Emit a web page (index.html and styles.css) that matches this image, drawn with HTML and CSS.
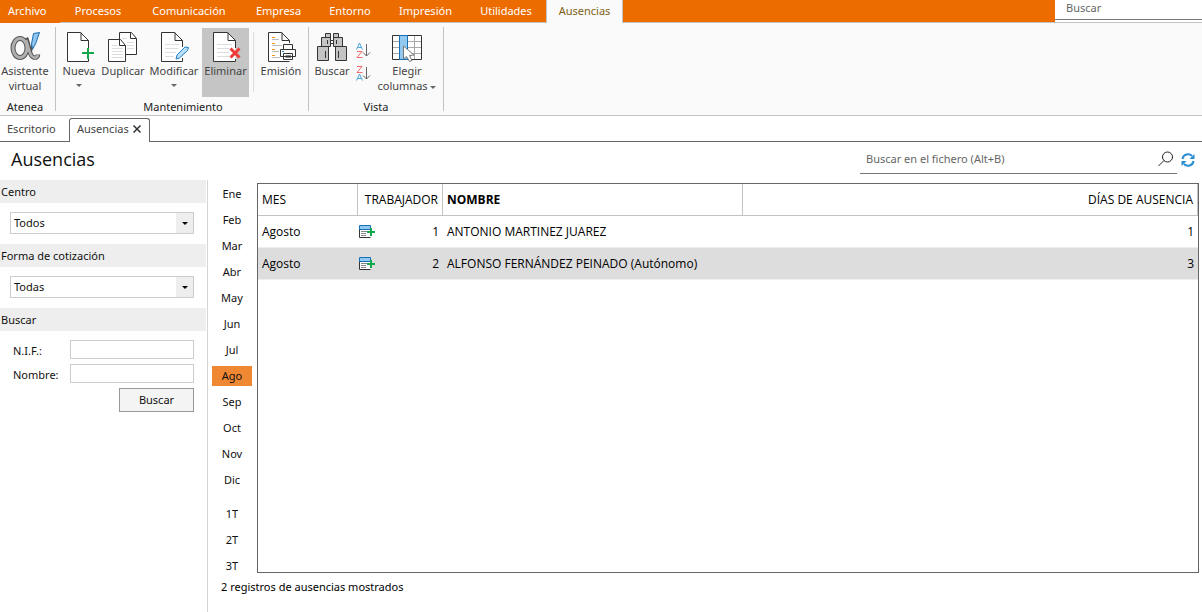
FILE: index.html
```html
<!DOCTYPE html>
<html lang="es">
<head>
<meta charset="utf-8">
<title>Ausencias</title>
<link rel="stylesheet" href="styles.css">
</head>
<body>
<div class="app">
  <header class="menu-bar">
    <nav class="menu">
      <button class="menu-item file">Archivo</button>
      <button class="menu-item">Procesos</button>
      <button class="menu-item">Comunicación</button>
      <button class="menu-item">Empresa</button>
      <button class="menu-item">Entorno</button>
      <button class="menu-item">Impresión</button>
      <button class="menu-item">Utilidades</button>
      <button class="menu-item active">Ausencias</button>
    </nav>
    <div class="menu-search"><input type="text" placeholder="Buscar" aria-label="Buscar"></div>
  </header>

  <section class="ribbon">
    <div class="group group-atenea">
      <div class="tools">
        <button class="tool">
          <svg width="32" height="32" viewBox="0 0 32 32"><path d="M17 8C20 14 20 27 25 27.500C27.500 28 29 26.500 29 24.500" fill="none" stroke="#555" stroke-width="4.500"/><path d="M24 15C22.500 20 21 22 19 24" fill="none" stroke="#555" stroke-width="3"/><ellipse cx="11" cy="18" rx="7" ry="9.500" fill="none" stroke="#555" stroke-width="5"/><ellipse cx="11" cy="18" rx="7" ry="9.500" fill="none" stroke="#b0b0b0" stroke-width="3"/><path d="M17 10C20 16 20 27 25 27.500C27 28 28.500 26.500 29 25" fill="none" stroke="#b0b0b0" stroke-width="2.500"/><path d="M24.500 3.500L30.500 2.500L26.500 14L23.500 19L22.500 14Z" fill="#8ec5ee" stroke="#1e6fb0"/></svg>
          <span>Asistente<br>virtual</span>
        </button>
      </div>
      <div class="group-name">Atenea</div>
    </div>

    <div class="group group-mant">
      <div class="tools">
        <button class="tool">
          <svg width="32" height="32" viewBox="0 0 32 32"><path d="M25.500 18V10.500L17.500 2.500H4.500V31.500H25.500V29" fill="#fff" stroke="#333"/><path d="M18 2.500V10.500H25.500" fill="none" stroke="#333"/><path d="M25 18V29M19 23H31" stroke="#12a84b" stroke-width="2"/></svg>
          <span>Nueva</span><i class="caret"></i>
        </button>
        <button class="tool">
          <svg width="32" height="32" viewBox="0 0 32 32"><path d="M12.500 2.500H24.500L29.500 8.500V24.500H12.500Z" fill="#fff" stroke="#333"/><path d="M23.500 2.500V8.500H29.500" fill="none" stroke="#333"/><path d="M15 8.500H20M20 12.500H27M20 15.500H27M20 18.500H27" stroke="#ddd"/><path d="M1.500 9.500H13.500L18.500 15.500V31.500H1.500Z" fill="#fff" stroke="#333"/><path d="M12.500 9.500V15.500H18.500" fill="none" stroke="#333"/><path d="M5 15.500H10M5 18.500H16M5 21.500H16M5 24.500H16M5 27.500H16" stroke="#ddd"/></svg>
          <span>Duplicar</span>
        </button>
        <button class="tool">
          <svg width="32" height="32" viewBox="0 0 32 32"><path d="M24.500 17V10.500L16.500 2.500H3.500V31.500H24.500V28" fill="#fff" stroke="#333"/><path d="M17 2.500V10.500H24.500" fill="none" stroke="#333"/><path d="M7 14.500H21M7 18.500H20M7 22.500H18M7 26.500H16" stroke="#ddd"/><path d="M18 29L19 25L27 17L30.500 17.500L29.500 20.500L21.500 28Z" fill="#b9def5" stroke="#1b7fc4"/></svg>
          <span>Modificar</span><i class="caret"></i>
        </button>
        <button class="tool pressed">
          <svg width="32" height="32" viewBox="0 0 32 32"><path d="M25.500 18V10.500L17.500 2.500H3.500V31.500H25.500V29" fill="#fff" stroke="#333"/><path d="M18 2.500V10.500H25.500" fill="none" stroke="#333"/><path d="M7 14.500H22M7 18.500H19M7 22.500H19M7 26.500H19" stroke="#ddd"/><path d="M20.500 18.500L29.500 27.500M29.500 18.500L20.500 27.500" stroke="#ef3b36" stroke-width="3"/></svg>
          <span>Eliminar</span>
        </button>
        <div class="divider"></div>
        <button class="tool">
          <svg width="32" height="32" viewBox="0 0 32 32"><path d="M24.500 13V10.500L16.500 2.500H3.500V31.500H24.500" fill="#fff" stroke="#333"/><path d="M17 2.500V10.500H24.500" fill="none" stroke="#333"/><path d="M7 7.500H10M7 13.500H10M7 19.500H10M7 25.500H10" stroke="#f29411"/><path d="M7 9.500H14M7 15.500H17M7 21.500H14M7 27.500H15" stroke="#bbb"/><path d="M18.500 14.500H27.500V19.500H18.500ZM15.500 19.500H30.500V26.500H15.500ZM18.500 23.500H27.500V29.500H18.500Z" fill="#fff" stroke="#333"/><path d="M20.500 25.500H26M20.500 27.500H26" stroke="#888"/><path d="M17 21.500H19" stroke="#1b7fc4"/></svg>
          <span>Emisión</span>
        </button>
      </div>
      <div class="group-name">Mantenimiento</div>
    </div>

    <div class="group group-vista">
      <div class="tools">
        <button class="tool">
          <svg width="32" height="32" viewBox="0 0 32 32"><g fill="#c4c4c4" stroke="#333"><path d="M9.500 3.500H14.500V7.500H9.500ZM17.500 3.500H22.500V7.500H17.500ZM5.500 7.500H14.500V16.500H5.500ZM17.500 7.500H26.500V16.500H17.500ZM1.500 16.500H12.500V30.500H1.500ZM19.500 16.500H30.500V30.500H19.500Z"/><path d="M14.500 10.500H17.500V13.500H14.500Z" fill="#fff"/><path d="M11.500 10V14M20.500 10V14M9.500 21V28M22.500 21V28"/></g></svg>
          <span>Buscar</span>
        </button>
        <div class="sorters">
          <button aria-label="Orden ascendente"><svg width="15" height="17" viewBox="0 0 15 17"><path d="M.5 7.500L3.500 1L6.500 7.500M1.500 5.500H5.500" fill="none" stroke="#4aa6dc"/><path d="M1 9.500H6L1 15.500H6.500" fill="none" stroke="#f06b6b"/><path d="M10.500 2V14M7 10.500L10.500 14L14 10.500" fill="none" stroke="#666"/></svg></button>
          <button aria-label="Orden descendente"><svg width="15" height="17" viewBox="0 0 15 17"><path d="M1 1.500H6L1 7.500H6.500" fill="none" stroke="#f06b6b"/><path d="M.5 15.500L3.500 9L6.500 15.500M1.500 13.500H5.500" fill="none" stroke="#4aa6dc"/><path d="M10.500 2V14M7 10.500L10.500 14L14 10.500" fill="none" stroke="#666"/></svg></button>
        </div>
        <button class="tool">
          <svg width="32" height="32" viewBox="0 0 32 32"><path d="M1.500 5.500H30.500V29.500H1.500Z" fill="#fff"/><path d="M2 11.500H30M2 17.500H30M2 23.500H30M23.500 6V29" stroke="#aaa"/><path d="M1.500 5.500H30.500V29.500H1.500Z" fill="none" stroke="#333"/><path d="M8.500 5.500H16.500V29.500H8.500Z" fill="#92c9f0" stroke="#1570b8"/><path d="M12.500 16V29L15.500 26.500L18.500 31.500L21 30.500L18.500 25.500L23 25Z" fill="#fff" stroke="#777"/></svg>
          <span>Elegir<br>columnas <i class="caret inline"></i></span>
        </button>
      </div>
      <div class="group-name">Vista</div>
    </div>
  </section>

  <nav class="doc-tabs">
    <button class="doc-tab">Escritorio</button>
    <button class="doc-tab current">Ausencias <svg width="8" height="8" viewBox="0 0 8 8"><path d="M.5 .5L7.500 7.500M7.500 .5L.5 7.500" stroke="#333" stroke-width="1.500"/></svg></button>
  </nav>

  <div class="title-row">
    <h1>Ausencias</h1>
    <div class="file-search">
      <input type="text" placeholder="Buscar en el fichero (Alt+B)" aria-label="Buscar en el fichero">
      <svg width="16" height="16" viewBox="0 0 16 16"><circle cx="9.500" cy="6" r="5" fill="none" stroke="#222"/><path d="M6 9.500L.5 15" stroke="#222"/></svg>
    </div>
    <button class="refresh" aria-label="Actualizar"><svg width="14" height="14" viewBox="0 0 14 14"><path d="M1.500 6A5.500 5.500 0 0 1 11 3M12.500 8A5.500 5.500 0 0 1 3 11" fill="none" stroke="#2a8fd3" stroke-width="2"/><path d="M13.500 1V6H8.500ZM.5 13V8H5.500Z" fill="#2a8fd3"/></svg></button>
  </div>

  <main class="content">
    <aside class="filters">
      <h2><label for="centro">Centro</label></h2>
      <div class="select"><select id="centro"><option>Todos</option></select></div>
      <h2><label for="forma">Forma de cotización</label></h2>
      <div class="select"><select id="forma"><option>Todas</option></select></div>
      <h2>Buscar</h2>
      <form class="find">
        <label for="nif">N.I.F.:</label><input id="nif" type="text">
        <label for="nombre">Nombre:</label><input id="nombre" type="text">
        <button type="button">Buscar</button>
      </form>
    </aside>

    <nav class="months">
      <button>Ene</button><button>Feb</button><button>Mar</button><button>Abr</button>
      <button>May</button><button>Jun</button><button>Jul</button><button class="selected">Ago</button>
      <button>Sep</button><button>Oct</button><button>Nov</button><button>Dic</button>
      <button class="quarter">1T</button><button>2T</button><button>3T</button>
    </nav>

    <section class="records">
      <div class="grid-box">
        <table>
          <colgroup><col class="c-mes"><col class="c-trab"><col class="c-nombre"><col></colgroup>
          <thead><tr><th>MES</th><th class="num">TRABAJADOR</th><th class="sorted">NOMBRE</th><th class="num">DÍAS DE AUSENCIA</th></tr></thead>
          <tbody>
            <tr><td>Agosto</td><td><div class="worker"><svg width="16" height="14" viewBox="0 0 16 14"><path d="M.5 .5H11.500V12.500H.5Z" fill="#fff"/><path d="M.5 4V12.500H11.500" fill="none" stroke="#333"/><path d="M.5 .5H11.500V4.500H.5Z" fill="#92c9f0" stroke="#1570b8"/><path d="M2 6.500H9M2 8.500H7M2 10.500H7" stroke="#888"/><path d="M12 3V11M8 7H16" stroke="#12a84b" stroke-width="2"/></svg><span>1</span></div></td><td>ANTONIO MARTINEZ JUAREZ</td><td class="num">1</td></tr>
            <tr class="selected"><td>Agosto</td><td><div class="worker"><svg width="16" height="14" viewBox="0 0 16 14"><path d="M.5 .5H11.500V12.500H.5Z" fill="#fff"/><path d="M.5 4V12.500H11.500" fill="none" stroke="#333"/><path d="M.5 .5H11.500V4.500H.5Z" fill="#92c9f0" stroke="#1570b8"/><path d="M2 6.500H9M2 8.500H7M2 10.500H7" stroke="#888"/><path d="M12 3V11M8 7H16" stroke="#12a84b" stroke-width="2"/></svg><span>2</span></div></td><td>ALFONSO FERNÁNDEZ PEINADO (Autónomo)</td><td class="num">3</td></tr>
          </tbody>
        </table>
      </div>
      <p class="count">2 registros de ausencias mostrados</p>
    </section>
  </main>
</div>
</body>
</html>
```

FILE: styles.css
```css
* { box-sizing: border-box; }
body { margin: 0; background: #fff; color: #111; font: 11px/15px "Noto Sans", "Open Sans", sans-serif; }
button, input, select { font: inherit; color: inherit; border: 0; padding: 0; margin: 0; background: none; border-radius: 0; outline: 0; }
button { white-space: nowrap; }
svg { display: block; flex: none; }
.app { display: flex; flex-direction: column; height: 100vh; overflow: hidden; }

.menu-bar { display: flex; justify-content: space-between; flex: none; height: 23px; background: #ec6c00; border-bottom: 1px solid #c3c3c3; }
.menu { display: grid; grid-template-columns: 60px 76px 106px 73px 70px 81px 80px 77px; color: #fff; }
.menu-item { padding-bottom: 2px; }
.menu-item.file { text-align: left; padding-left: 8px; background: #ec6c00; margin-bottom: -1px; padding-bottom: 3px; }
.menu-item.active { background: #fafafa; color: #7f6016; border: solid #c3c3c3; border-width: 0 1px; margin-bottom: -1px; padding-bottom: 3px; }
.menu-search { width: 147px; background: #fff; padding-bottom: 2px; }
.menu-search input { width: 100%; height: 20px; border-bottom: 1px solid #77777b; padding: 0 11px 4px; }
input::placeholder { color: #666; opacity: 1; }

.ribbon { display: flex; flex: none; height: 93px; padding-top: 4px; background: #fafafa; border-bottom: 1px solid #c3c3c3; color: #444; }
.group { display: flex; flex-direction: column; justify-content: space-between; height: 84px; border-right: 1px solid #c3c3c3; padding-top: 1px; }
.group-atenea { width: 56px; }
.group-mant { width: 253px; padding-left: 2px; }
.group-vista { width: 135px; }
.tools { display: grid; height: 69px; }
.group-atenea .tools { grid-template-columns: 50px; }
.group-mant .tools { grid-template-columns: 42px 46px 58px 47px 8px 48px; }
.group-mant .pressed { margin-left: -2px; }
.group-vista .tools { grid-template-columns: 46px 18px 68px; }
.tool { display: flex; flex-direction: column; align-items: center; padding-top: 2px; gap: 1px; }
.tool span { line-height: 15px; }
.tool.pressed { background: #c5c5c5; }
.caret { width: 0; height: 0; margin-top: 5px; border: 3px solid transparent; border-top-color: #666; border-bottom: 0; }
.caret.inline { display: inline-block; vertical-align: middle; margin: 0; }
.divider { width: 1px; height: 60px; margin: 4px auto 0; background: #ddd; }
.sorters { display: flex; flex-direction: column; gap: 6px; padding: 14px 0 0 1px; }
.group-name { text-align: center; color: #222; line-height: 9px; }
.group-atenea .group-name { padding-right: 5px; }
.group-mant .tools { grid-template-columns: 42px 46px 56px 47px 8px 48px; }
.group-mant .pressed { margin-left: 0; }

.doc-tabs { display: flex; flex: none; height: 26px; padding-top: 2px; border-bottom: 1px solid #666; color: #444; }
.doc-tab { width: 69px; padding: 0 0 2px 7px; text-align: left; }
.doc-tab.current { display: flex; align-items: center; gap: 4px; width: 81px; margin-bottom: -1px; padding: 0 0 4px 7px; background: #fff; border: 1px solid #666; border-bottom: 0; border-radius: 3px 3px 0 0; }

.title-row { display: flex; flex: none; height: 38px; padding: 0 7px 0 11px; }
h1 { flex: 1; margin: 0; font: 400 18px/34px "Open Sans", "Noto Sans", sans-serif; }
.file-search { display: flex; align-items: center; width: 317px; height: 32px; padding: 2px 3px 0 6px; border-bottom: 1px solid #77777b; }
.file-search input { flex: 1; min-width: 0; }
.refresh { width: 18px; padding: 0 0 2px 4px; }

.content { display: flex; flex: 1; min-height: 0; }
.filters { width: 208px; padding-right: 1px; border-right: 1px solid #d5d5d5; }
h2 { margin: 0; padding-left: 1px; background: #eee; font-size: 11px; line-height: 23px; font-weight: 400; }
.select { position: relative; margin: 9px 12px 10px 10px; }
.select select { display: block; width: 100%; height: 22px; padding: 0 0 1px 3px; border: 1px solid #ccc; appearance: none; background: linear-gradient(#eee, #eee) right / 17px 100% no-repeat; }
.select::after { content: ""; position: absolute; right: 6px; top: 10px; border: 3px solid transparent; border-top-color: #000; border-bottom: 0; pointer-events: none; }
.find { display: grid; grid-template-columns: 57px 1fr; row-gap: 5px; align-items: center; padding: 9px 12px 0 13px; }
.find label { padding-top: 2px; line-height: 17px; }
.find input { width: 100%; height: 19px; border: 1px solid #ccc; padding: 0 3px; }
.find button { grid-column: 2; justify-self: end; width: 75px; height: 24px; padding-bottom: 2px; background: #f4f4f4; border: 1px solid #999; }

.months { display: flex; flex-direction: column; gap: 6px; width: 49px; padding: 4px 5px 0 4px; overflow: hidden; }
.months button { flex: none; height: 20px; padding-bottom: 2px; }
.months .selected { background: #f08833; }
.months .quarter { margin-top: 8px; }

.records { display: flex; flex: 1; flex-direction: column; min-width: 0; padding: 3px 3px 0 0; }
.grid-box { flex: 1; border: 1px solid #666; }
table { width: 100%; table-layout: fixed; border-collapse: separate; border-spacing: 0; color: #000; font: 12px/16px "Open Sans", "Noto Sans", sans-serif; }
.c-mes { width: 100px; }
.c-trab { width: 85px; }
.c-nombre { width: 300px; }
th, td { height: 32px; padding: 0 4px; text-align: left; font-weight: 400; border-bottom: 1px solid #eee; white-space: nowrap; }
th { border-bottom-color: #c3c3c3; border-right: 1px solid #c3c3c3; }
th.sorted { font-weight: 700; }
.num { text-align: right; }
tr.selected td { background: #ddd; }
.worker { display: flex; align-items: center; justify-content: space-between; margin-left: -3px; }
.count { margin: 0 0 0 -36px; padding: 6px 0 18px; color: #000; }
```
